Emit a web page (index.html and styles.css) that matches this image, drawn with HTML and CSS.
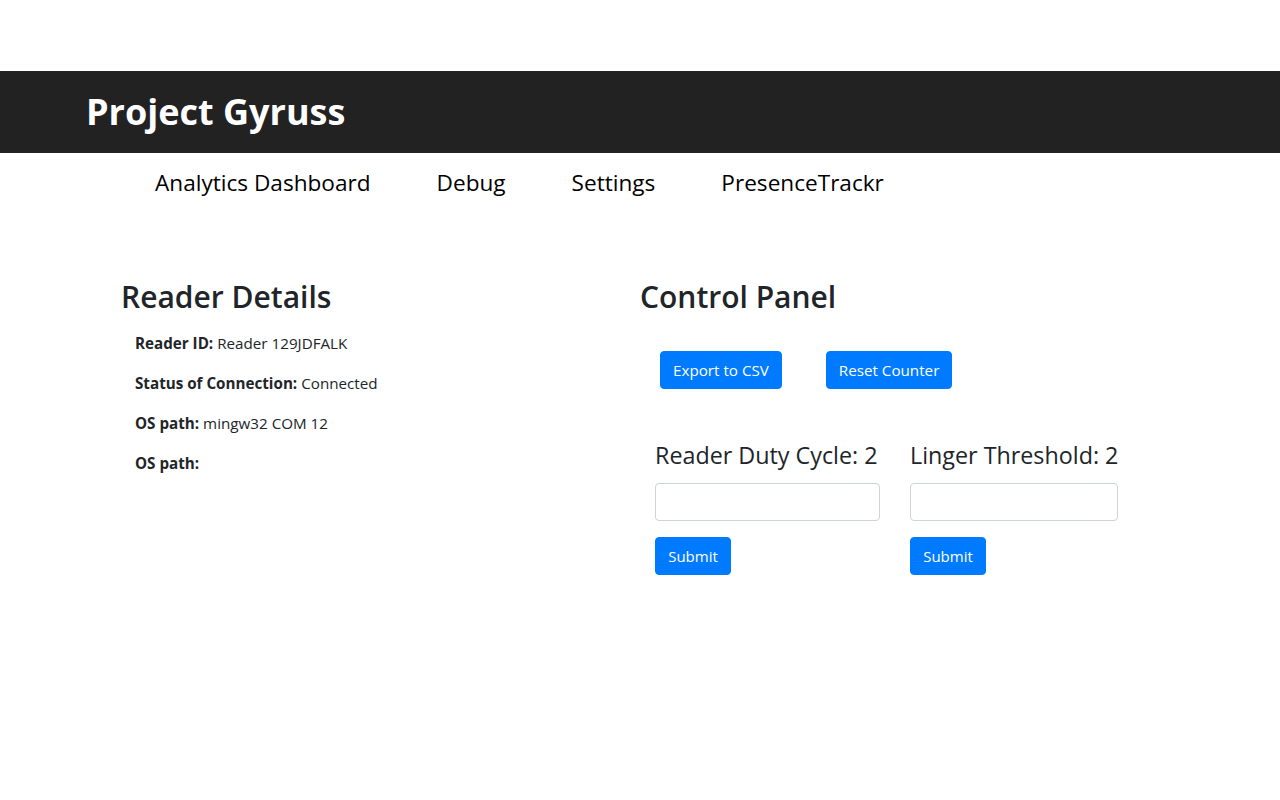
FILE: index.html
```html
<!DOCTYPE html>
<html lang="en">
<head>
<meta charset="utf-8">
<title>Project Gyruss</title>
<link rel="stylesheet" href="styles.css">
</head>
<body>
<header class="topbar">
  <h1 class="brand">Project Gyruss</h1>
</header>
<nav class="nav">
  <a class="nav-link" href="#">Analytics Dashboard</a>
  <a class="nav-link" href="#">Debug</a>
  <a class="nav-link" href="#">Settings</a>
  <a class="nav-link" href="#">PresenceTrackr</a>
</nav>
<main class="content">
  <section class="details">
    <h2 class="section-title">Reader Details</h2>
    <ul class="detail-list">
      <li><b>Reader ID:</b> Reader 129JDFALK</li>
      <li><b>Status of Connection:</b> Connected</li>
      <li><b>OS path:</b> mingw32 COM 12</li>
      <li><b>OS path:</b></li>
    </ul>
  </section>
  <section class="control">
    <h2 class="section-title">Control Panel</h2>
    <div class="actions">
      <button class="btn">Export to CSV</button>
      <button class="btn">Reset Counter</button>
    </div>
    <div class="forms">
      <form class="setting setting-duty">
        <label class="setting-label">Reader Duty Cycle: 2</label>
        <input class="setting-input" type="text">
        <button class="btn" type="button">Submit</button>
      </form>
      <form class="setting setting-linger">
        <label class="setting-label">Linger Threshold: 2</label>
        <input class="setting-input" type="text">
        <button class="btn" type="button">Submit</button>
      </form>
    </div>
  </section>
</main>
</body>
</html>
```
FILE: styles.css
```css
* { box-sizing: border-box; }
body {
  margin: 0;
  padding-top: 71px;
  font-family: "Open Sans", "Noto Sans", sans-serif;
  color: #212529;
  background: #fff;
}
.topbar {
  background: #222222;
  height: 82px;
  display: flex;
  align-items: center;
  padding-left: 86px;
}
.brand {
  margin: 0;
  color: #fff;
  font-size: 36px;
  font-weight: 700;
  line-height: 1.2;
}
.nav {
  display: flex;
  gap: 66px;
  padding-left: 155px;
  height: 58px;
  align-items: center;
}
.nav-link {
  color: #000;
  text-decoration: none;
  font-size: 22.6px;
}
.content {
  display: grid;
  grid-template-columns: 519px 1fr;
  padding-left: 121px;
  padding-top: 67px;
}
.section-title {
  margin: 0;
  font-size: 30px;
  font-weight: 600;
  line-height: 38px;
}
.detail-list {
  list-style: none;
  margin: 7px 0 0;
  padding-left: 14px;
  font-size: 15.2px;
}
.detail-list li {
  height: 40px;
  display: flex;
  align-items: center;
  gap: 4px;
}
.detail-list b { font-weight: 700; }
.actions {
  display: flex;
  gap: 44px;
  padding-left: 20px;
  margin-top: 35px;
}
.btn {
  font-family: inherit;
  background: #007bff;
  color: #fff;
  border: 1px solid #007bff;
  border-radius: 4px;
  font-size: 15.2px;
  line-height: 24px;
  height: 38px;
  padding: 0 12px;
}
.forms {
  display: flex;
  gap: 30px;
  padding-left: 15px;
  margin-top: 52px;
}
.setting {
  display: flex;
  flex-direction: column;
  align-items: flex-start;
  margin: 0;
}
.setting-duty { width: 225px; }
.setting-linger { width: 208px; }
.setting-label {
  font-size: 23.3px;
  font-weight: 500;
  line-height: 28px;
  white-space: nowrap;
  margin-bottom: 14px;
}
.setting-input {
  width: 100%;
  height: 38px;
  border: 1px solid #ced4da;
  border-radius: 4px;
  margin-bottom: 16px;
  font-family: inherit;
  font-size: 16px;
}
.setting .btn { width: 76px; padding: 0; font-size: 15px; }
```
